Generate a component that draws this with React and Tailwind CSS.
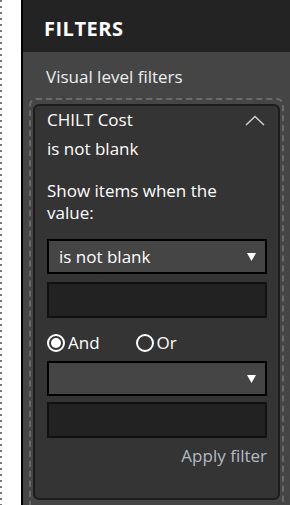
const font = { fontFamily: '"Open Sans", "Noto Sans", sans-serif' };

const Dropdown = ({ value }) => (
  <div className="flex h-[35px] items-center justify-between border-2 border-black bg-[#454545] pl-[10px] pr-[9px] text-[17px] text-white">
    <span className="leading-[22px]">{value}</span>
    <svg width="9" height="8" viewBox="0 0 9 8">
      <path d="M0 0 H9 L4.5 8 Z" fill="#fff" />
    </svg>
  </div>
);

const TextBox = () => <div className="h-[36px] border-2 border-[#111] bg-[#222]" />;

const Radio = ({ checked, label }) => (
  <label className="flex items-center gap-[3px]">
    <span className="flex h-[18px] w-[18px] items-center justify-center rounded-full border-2 border-white">
      {checked && <span className="h-[10px] w-[10px] rounded-full bg-white" />}
    </span>
    <span className="text-[17px] leading-[22px] text-white">{label}</span>
  </label>
);

export default function App() {
  return (
    <div className="flex h-[505px] w-[290px] overflow-hidden bg-white" style={font}>
      <div className="w-[21px] shrink-0">
        <div className="h-full w-[2px] bg-[repeating-linear-gradient(to_bottom,#777_0px,#777_2px,transparent_2px,transparent_6px)]" />
      </div>

      <div className="flex flex-1 flex-col border-l-2 border-black">
        <div className="h-[52px] shrink-0 bg-[#232323] pl-[21px] pt-[16px] text-[20px] font-bold leading-[26px] tracking-[0.5px] text-white">
          FILTERS
        </div>

        <div className="flex-1 bg-[#454545] pr-[6px] pl-[6px] pt-[14px]">
          <div className="pl-[17px] text-[17px] leading-[22px] text-[#eee]">Visual level filters</div>

          <div className="mt-[10px] rounded-t-[7px] border-2 border-b-0 border-dashed border-[#6a6a6a] px-[2px] pt-[4px]">
            <div className="rounded-[6px] border-2 border-[#1c1c1c] bg-[#343434] pt-[3px] pb-[31px] pl-[12px] pr-[11px]">
              <div className="flex items-start justify-between">
                <div className="text-[17px] leading-[22px] text-white">CHILT Cost</div>
                <svg width="20" height="11" viewBox="0 0 20 11" className="mt-[6px] mr-[2px]">
                  <path d="M1 10 L10 1.5 L19 10" fill="none" stroke="#cfcfcf" strokeWidth="1.5" />
                </svg>
              </div>
              <div className="mt-[7px] text-[17px] leading-[22px] text-white">is not blank</div>

              <div className="mt-[20px] text-[17px] leading-[22px] text-white">
                Show items when the
                <br />
                value:
              </div>

              <div className="mt-[15px]">
                <Dropdown value="is not blank" />
              </div>
              <div className="mt-[8px]">
                <TextBox />
              </div>

              <div className="mt-[14px] flex items-center gap-[36px]">
                <Radio checked label="And" />
                <Radio label="Or" />
              </div>

              <div className="mt-[7px]">
                <Dropdown value="" />
              </div>
              <div className="mt-[6px]">
                <TextBox />
              </div>

              <div className="mt-[7px] text-right text-[17px] leading-[22px] text-[#b5bac2]">Apply filter</div>
            </div>

            <div className="mt-[5px] h-[20px] rounded-t-[6px] border-2 border-b-0 border-[#1c1c1c] bg-[#343434]" />
          </div>
        </div>
      </div>
    </div>
  );
}
